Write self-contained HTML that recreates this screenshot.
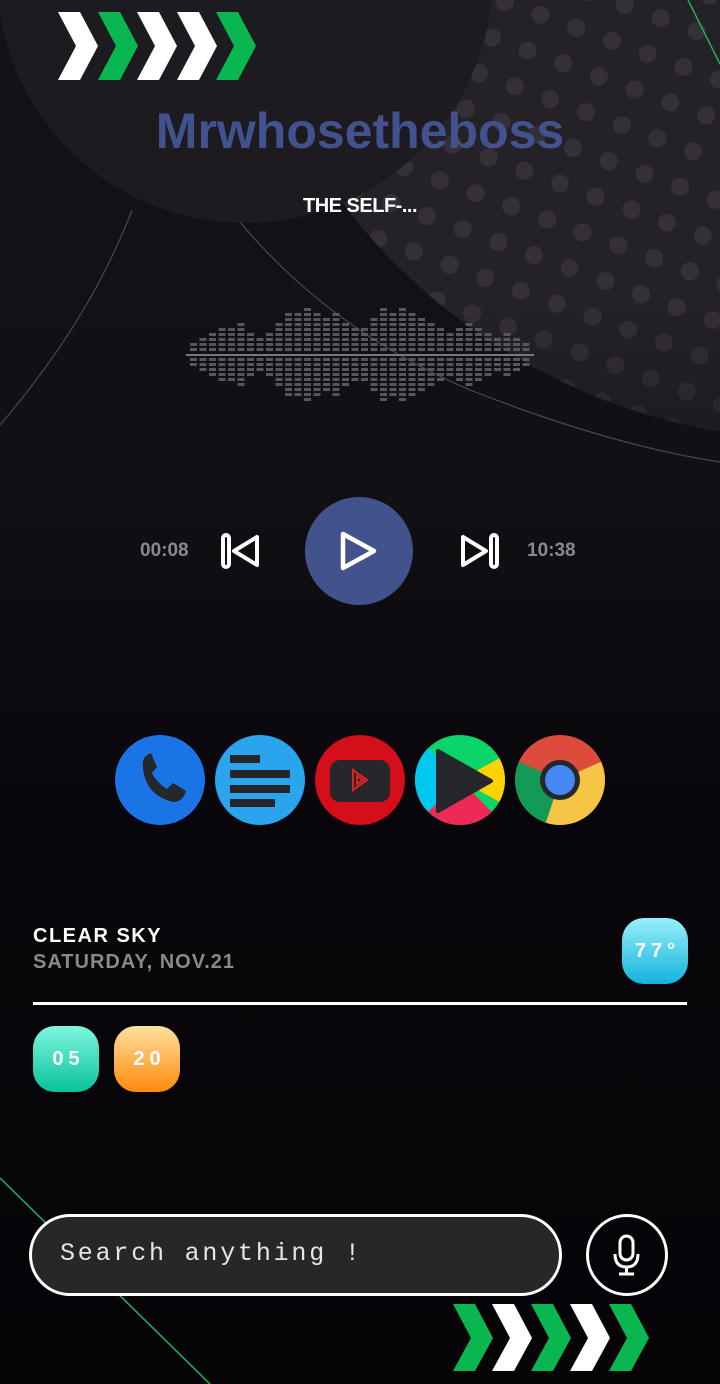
<!DOCTYPE html>
<html><head><meta charset="utf-8">
<style>
*{margin:0;padding:0;box-sizing:border-box}
body{width:720px;height:1384px;overflow:hidden;background:#070508;font-family:"Liberation Sans",sans-serif;position:relative}
.abs{position:absolute}
.cd{position:absolute;width:66px;height:66px;border-radius:22px;color:#fff;font-weight:bold;font-size:20px;letter-spacing:5px;display:flex;align-items:center;justify-content:center;padding-left:5px}
.ic{position:absolute;top:735px;width:90px;height:90px;border-radius:50%;overflow:hidden}
</style></head><body>
<svg class="abs" style="left:0;top:0" width="720" height="1384">
<defs>
<pattern id="dots" width="38" height="38" patternUnits="userSpaceOnUse" patternTransform="rotate(20)">
<circle cx="19" cy="19" r="9" fill="#343036"/>
</pattern>
<linearGradient id="bg" x1="0" y1="0" x2="0" y2="1"><stop offset="0" stop-color="#141216"/><stop offset="0.35" stop-color="#121014"/><stop offset="0.6" stop-color="#08060a"/><stop offset="1" stop-color="#060407"/></linearGradient>
<linearGradient id="fade" x1="0" y1="0" x2="0" y2="1"><stop offset="0" stop-color="#121014" stop-opacity="0"/><stop offset="1" stop-color="#121014" stop-opacity="0.9"/></linearGradient>
</defs>
<rect width="720" height="1384" fill="url(#bg)"/>
<circle cx="820" cy="-160" r="600" fill="#252227"/>
<circle cx="820" cy="-160" r="600" fill="url(#dots)"/>
<rect y="300" width="720" height="160" fill="url(#fade)" opacity="0.5"/>
<circle cx="245" cy="-25" r="248" fill="#1d1b20"/>
<path d="M0 425 Q90 320 132 210" stroke="#4a474e" stroke-width="1.2" fill="none"/>
<path d="M240 222 Q330 330 470 390 Q610 445 720 462" stroke="#4a474e" stroke-width="1.2" fill="none"/>
<line x1="688" y1="0" x2="720" y2="64" stroke="#19b85a" stroke-width="1.5"/>
<line x1="0" y1="1178" x2="210" y2="1384" stroke="#19b85a" stroke-width="1.5"/>
<g>
<polygon points="58,12 80,12 98,46 80,80 58,80 76,46" fill="#fff"/>
<polygon points="98,12 120,12 138,46 120,80 98,80 116,46" fill="#0ab64f"/>
<polygon points="137,12 159,12 177,46 159,80 137,80 155,46" fill="#fff"/>
<polygon points="177,12 199,12 217,46 199,80 177,80 195,46" fill="#fff"/>
<polygon points="216,12 238,12 256,46 238,80 216,80 234,46" fill="#0ab64f"/>
</g>
<g transform="translate(0,1304)">
<polygon points="453,0 475,0 493,34 475,67 453,67 471,34" fill="#0ab64f"/>
<polygon points="492,0 514,0 532,34 514,67 492,67 510,34" fill="#fff"/>
<polygon points="531,0 553,0 571,34 553,67 531,67 549,34" fill="#0ab64f"/>
<polygon points="570,0 592,0 610,34 592,67 570,67 588,34" fill="#fff"/>
<polygon points="609,0 631,0 649,34 631,67 609,67 627,34" fill="#0ab64f"/>
</g>
<g fill="#58565b" id="wave"></g>
<line x1="186" y1="355" x2="534" y2="355" stroke="#7a787c" stroke-width="2"/>
</svg>
<div class="abs" style="left:0;top:102px;width:720px;text-align:center;font-size:50px;font-weight:bold;color:#42528f;letter-spacing:0px">Mrwhosetheboss</div>
<div class="abs" style="left:0;top:195px;width:720px;text-align:center;font-size:20px;font-weight:bold;color:#fff;letter-spacing:-0.5px">THE SELF-...</div>
<div class="abs" style="left:140px;top:540px;font-size:19px;font-weight:bold;color:#8b898d">00:08</div>
<div class="abs" style="left:527px;top:540px;font-size:19px;font-weight:bold;color:#8b898d">10:38</div>
<svg class="abs" style="left:220px;top:532px" width="42" height="38"><g fill="none" stroke="#fff" stroke-width="4" stroke-linejoin="round"><rect x="3" y="3" width="6" height="32" rx="3"/><path d="M37 5 L37 33 L14 19 Z"/></g></svg>
<svg class="abs" style="left:458px;top:532px" width="42" height="38"><g fill="none" stroke="#fff" stroke-width="4" stroke-linejoin="round"><rect x="33" y="3" width="6" height="32" rx="3"/><path d="M5 5 L5 33 L28 19 Z"/></g></svg>
<div class="abs" style="left:305px;top:497px;width:108px;height:108px;border-radius:50%;background:#42528c"></div>
<svg class="abs" style="left:336px;top:528px" width="46" height="46"><path d="M7 6 L7 40 L38 23 Z" fill="none" stroke="#fff" stroke-width="4.5" stroke-linejoin="round"/></svg>
<div class="ic" style="left:115px;background:#1b74e6"><svg width="90" height="90"><path d="M28 32 Q26 22 36 18 L42 32 L37 38 Q42 48 52 54 L58 48 L71 56 Q68 67 58 67 Q30 60 28 32Z" fill="#26272b"/></svg></div>
<div class="ic" style="left:215px;background:#2ba4ee"><svg width="90" height="90" fill="#24262a"><rect x="15" y="20" width="30" height="8"/><rect x="15" y="35" width="60" height="8"/><rect x="15" y="50" width="60" height="8"/><rect x="15" y="64" width="45" height="8"/></svg></div>
<div class="ic" style="left:315px;background:#d40f1a"><svg width="90" height="90"><rect x="15" y="25" width="60" height="42" rx="10" fill="#27272b"/><path d="M38 35 L52 45 L38 55 Z M42 41 L48 45 L42 49Z" fill="none" stroke="#d22" stroke-width="2"/></svg></div>
<div class="ic" style="left:415px;background:#0bd46a"><svg width="90" height="90"><path d="M0 0 H45 L0 45Z" fill="#0bd46a"/><path d="M0 0 L45 45 L0 90Z" fill="#00c8f0"/><path d="M90 20 L45 45 L90 70Z" fill="#ffd200"/><path d="M0 90 L45 45 L90 90Z" fill="#ec2a55"/><path d="M23 16 L76 46 L23 76 Z" fill="#26272b" stroke="#26272b" stroke-width="4" stroke-linejoin="round"/></svg></div>
<div class="ic" style="left:515px;background:#dd4b3a"><svg width="90" height="90"><path d="M45 45 L5 30 L0 90 L45 90Z" fill="#119b55"/><path d="M45 45 L90 25 L90 90 L30 90Z" fill="#f7c545"/><path d="M45 45 L0 25 L0 90Z" fill="#119b55"/><circle cx="45" cy="45" r="20" fill="#26272b"/><circle cx="45" cy="45" r="15" fill="#4587f4"/></svg></div>
<div class="abs" style="left:33px;top:925px;font-size:20px;font-weight:bold;color:#fff;letter-spacing:1.5px">CLEAR SKY</div>
<div class="abs" style="left:33px;top:951px;font-size:20px;font-weight:bold;color:#8a888c;letter-spacing:1px">SATURDAY, NOV.21</div>
<div class="cd" style="left:622px;top:918px;background:linear-gradient(#9aeefa,#12b4dc)">77°</div>
<div class="abs" style="left:33px;top:1002px;width:654px;height:3px;background:#fff"></div>
<div class="cd" style="left:33px;top:1026px;background:linear-gradient(#7ff6de,#08c29c)">05</div>
<div class="cd" style="left:114px;top:1026px;background:linear-gradient(#ffe0a0,#ff8a0a)">20</div>
<div class="abs" style="left:29px;top:1214px;width:533px;height:82px;border-radius:41px;border:3px solid #fff;background:#27272a;color:#e6e6e6;font-family:'Liberation Mono',monospace;font-size:25px;padding:22px 0 0 28px;letter-spacing:2.8px">Search anything !</div>
<div class="abs" style="left:586px;top:1214px;width:82px;height:82px;border-radius:50%;border:3px solid #fff"></div>
<svg class="abs" style="left:610px;top:1234px" width="34" height="44"><rect x="10" y="2" width="13" height="24" rx="6.5" fill="none" stroke="#fff" stroke-width="3"/><path d="M5 20 Q5 33 16.5 33 Q28 33 28 20" fill="none" stroke="#fff" stroke-width="3"/><line x1="16.5" y1="33" x2="16.5" y2="40" stroke="#fff" stroke-width="3"/><line x1="9" y1="40" x2="24" y2="40" stroke="#fff" stroke-width="3"/></svg>
<script>
var g=document.getElementById('wave'),s='';
var h=[2,3,4,5,5,6,4,3,4,6,8,8,9,8,7,8,6,5,5,7,9,8,9,8,7,6,5,4,5,6,5,4,3,4,3,2];
for(var i=0;i<h.length;i++){var x=190+i*9.5,n=h[i];for(var k=-n;k<=n;k++){if(k==0)continue;s+='<rect x="'+x+'" y="'+(355+k*5-2)+'" width="7" height="3"/>';}}
g.innerHTML=s;
</script>
</body></html>
